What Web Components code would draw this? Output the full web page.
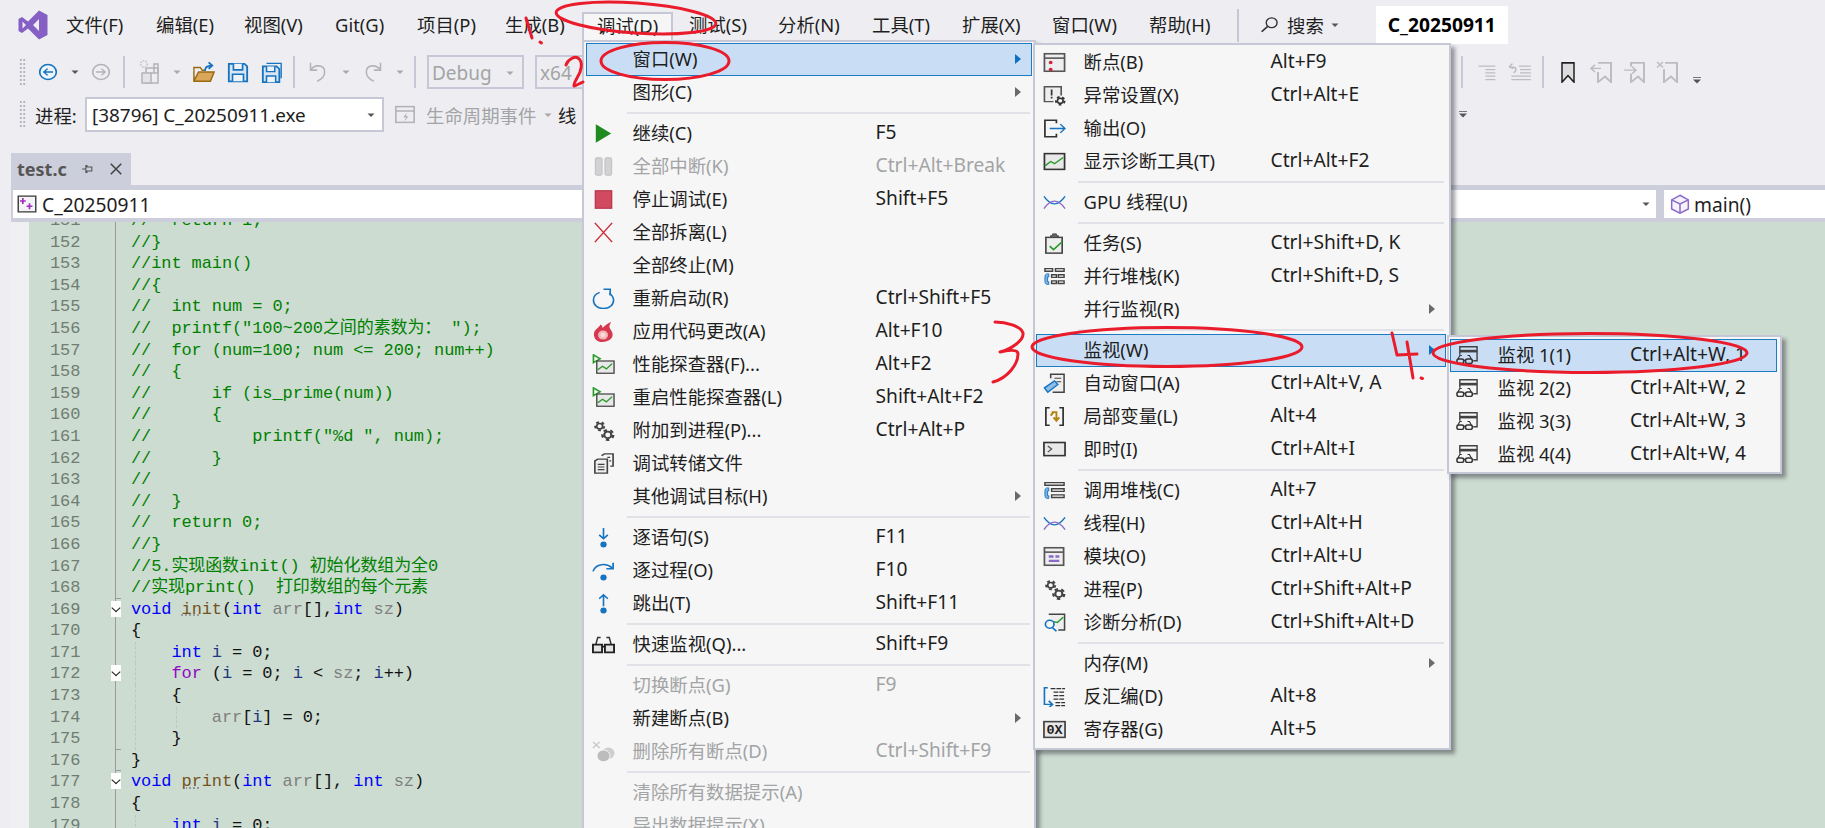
<!DOCTYPE html>
<html lang="zh"><head><meta charset="utf-8"><title>VS</title>
<style>
html,body{margin:0;padding:0;background:#eeeef2;overflow:hidden}
body{font-family:"Noto Sans","Noto Sans CJK SC",sans-serif;font-size:18.4px;color:#1e1e1e}
</style></head><body>
<vs-app>
  <vs-menubar></vs-menubar>
  <vs-toolbar row="1"></vs-toolbar>
  <vs-toolbar row="2"></vs-toolbar>
  <vs-doc></vs-doc>

  <vs-menu style="left:582px;top:40px;width:454px;--icon-w:34px;--text-x:46.5px;--key-x:289.5px;padding:.5px 2px 0 2px">
    <vs-item active arrow label="窗口(W)"></vs-item>
    <vs-item arrow label="图形(C)"></vs-item>
    <vs-sep style="--sl:41px;--sr:2px"></vs-sep>
    <vs-item icon="play" label="继续(C)" key="F5"></vs-item>
    <vs-item disabled icon="pause" label="全部中断(K)" key="Ctrl+Alt+Break"></vs-item>
    <vs-item icon="stop" label="停止调试(E)" key="Shift+F5"></vs-item>
    <vs-item icon="x" label="全部拆离(L)"></vs-item>
    <vs-item label="全部终止(M)"></vs-item>
    <vs-item icon="restart" label="重新启动(R)" key="Ctrl+Shift+F5"></vs-item>
    <vs-item icon="flame" label="应用代码更改(A)" key="Alt+F10"></vs-item>
    <vs-item icon="perf" label="性能探查器(F)..." key="Alt+F2"></vs-item>
    <vs-item icon="perf" label="重启性能探查器(L)" key="Shift+Alt+F2"></vs-item>
    <vs-item icon="gears" label="附加到进程(P)..." key="Ctrl+Alt+P"></vs-item>
    <vs-item icon="dump" label="调试转储文件"></vs-item>
    <vs-item arrow label="其他调试目标(H)"></vs-item>
    <vs-sep style="--sl:41px;--sr:2px"></vs-sep>
    <vs-item icon="stepin" label="逐语句(S)" key="F11"></vs-item>
    <vs-item icon="stepover" label="逐过程(O)" key="F10"></vs-item>
    <vs-item icon="stepout" label="跳出(T)" key="Shift+F11"></vs-item>
    <vs-sep style="--sl:41px;--sr:2px"></vs-sep>
    <vs-item icon="glasses" label="快速监视(Q)..." key="Shift+F9"></vs-item>
    <vs-sep style="--sl:41px;--sr:2px"></vs-sep>
    <vs-item disabled label="切换断点(G)" key="F9"></vs-item>
    <vs-item arrow label="新建断点(B)"></vs-item>
    <vs-item disabled icon="bpx" label="删除所有断点(D)" key="Ctrl+Shift+F9"></vs-item>
    <vs-sep style="--sl:41px;--sr:2px"></vs-sep>
    <vs-item disabled label="清除所有数据提示(A)"></vs-item>
    <vs-item disabled label="导出数据提示(X)"></vs-item>
  </vs-menu>

  <vs-menu style="left:1033px;top:43px;width:418px;--icon-w:36px;--text-x:47.5px;--key-x:234.5px;padding:.5px 3px 2.5px 1px">
    <vs-item icon="bpwin" label="断点(B)" key="Alt+F9"></vs-item>
    <vs-item icon="exc" label="异常设置(X)" key="Ctrl+Alt+E"></vs-item>
    <vs-item icon="output" label="输出(O)"></vs-item>
    <vs-item icon="diag" label="显示诊断工具(T)" key="Ctrl+Alt+F2"></vs-item>
    <vs-sep style="--sl:42px;--sr:2px"></vs-sep>
    <vs-item icon="threads" label="GPU 线程(U)"></vs-item>
    <vs-sep style="--sl:42px;--sr:2px"></vs-sep>
    <vs-item icon="task" label="任务(S)" key="Ctrl+Shift+D, K"></vs-item>
    <vs-item icon="pstacks" label="并行堆栈(K)" key="Ctrl+Shift+D, S"></vs-item>
    <vs-item arrow label="并行监视(R)"></vs-item>
    <vs-sep style="--sl:42px;--sr:2px"></vs-sep>
    <vs-item active arrow label="监视(W)"></vs-item>
    <vs-item icon="autos" label="自动窗口(A)" key="Ctrl+Alt+V, A"></vs-item>
    <vs-item icon="locals" label="局部变量(L)" key="Alt+4"></vs-item>
    <vs-item icon="immediate" label="即时(I)" key="Ctrl+Alt+I"></vs-item>
    <vs-sep style="--sl:42px;--sr:2px"></vs-sep>
    <vs-item icon="callstack" label="调用堆栈(C)" key="Alt+7"></vs-item>
    <vs-item icon="threads" label="线程(H)" key="Ctrl+Alt+H"></vs-item>
    <vs-item icon="modules" label="模块(O)" key="Ctrl+Alt+U"></vs-item>
    <vs-item icon="gears" label="进程(P)" key="Ctrl+Shift+Alt+P"></vs-item>
    <vs-item icon="diagan" label="诊断分析(D)" key="Ctrl+Shift+Alt+D"></vs-item>
    <vs-sep style="--sl:42px;--sr:2px"></vs-sep>
    <vs-item arrow label="内存(M)"></vs-item>
    <vs-item icon="disasm" label="反汇编(D)" key="Alt+8"></vs-item>
    <vs-item icon="reg" label="寄存器(G)" key="Alt+5"></vs-item>
  </vs-menu>

  <vs-menu style="left:1447px;top:335px;width:335px;--icon-w:34px;--text-x:47.5px;--key-x:180px;padding:1.5px 3px 1.5px 1px">
    <vs-item active icon="watch" label="监视 1(1)" key="Ctrl+Alt+W, 1"></vs-item>
    <vs-item icon="watch" label="监视 2(2)" key="Ctrl+Alt+W, 2"></vs-item>
    <vs-item icon="watch" label="监视 3(3)" key="Ctrl+Alt+W, 3"></vs-item>
    <vs-item icon="watch" label="监视 4(4)" key="Ctrl+Alt+W, 4"></vs-item>
  </vs-menu>

  <vs-marks></vs-marks>
</vs-app>

<script>
const D='#424242',B='#1573c0',G='#2a9a2a',P='#8a6ac8',R='#d0203c',L='#b4b4b8',F='fill="none"';
const gear=(x,y,r,c=D)=>`<circle cx="${x}" cy="${y}" r="${r*.62}" ${F} stroke="${c}" stroke-width="${r*.36}"/><circle cx="${x}" cy="${y}" r="${r*.95}" ${F} stroke="${c}" stroke-width="${r*.4}" stroke-dasharray="${r*.6} ${r*.6}"/>`;
const specs=(x,y,c=D)=>`<path d="M${x+1} ${y+3}l2-4h2M${x+15} ${y+3}l-2-4h-2" ${F} stroke="${c}" stroke-width="1.2"/><rect x="${x}" y="${y+3}" width="7" height="5" rx="2" ${F} stroke="${c}" stroke-width="1.6"/><rect x="${x+9}" y="${y+3}" width="7" height="5" rx="2" ${F} stroke="${c}" stroke-width="1.6"/><path d="M${x+7} ${y+4.5}h2" stroke="${c}" stroke-width="1.4"/>`;
const phone=`<path d="M6 9H4.5C3 9 2 10 2 13.5v3c0 3.500 1 4.500 2.500 4.500H6v-3H4.800v-5.500H6z" fill="#7fb4e2" stroke="${B}" stroke-width="1"/>`;
const perf=`<path d="M1.500 1v9l7-4.500z" ${F} stroke="${G}" stroke-width="1.700"/><rect x="5" y="8" width="18" height="14" fill="#e8e8e8" stroke="${D}" stroke-width="1.400"/><path d="M6 18l5-4 4 3 6-6" ${F} stroke="${G}" stroke-width="1.500"/>`;
const ICONS={
 caret:`<path d="M5 9h14l-7 7z" fill="#555"/>`, caretOff:`<path d="M5 9h14l-7 7z" fill="#a8a8ac"/>`,
 over:`<path d="M4 4h16v2H4z" fill="#777"/><path d="M4 9h16l-8 8z" fill="#555"/>`,
 back:`<circle cx="12" cy="12" r="10" fill="#eef4fb" stroke="${B}" stroke-width="2"/><path d="M18 12H7M11.500 7.500L7 12l4.500 4.500" ${F} stroke="${B}" stroke-width="1.800"/>`,
 fwd:`<circle cx="12" cy="12" r="10" ${F} stroke="${L}" stroke-width="2"/><path d="M6 12h11M12.500 7.500L17 12l-4.500 4.500" ${F} stroke="${L}" stroke-width="1.800"/>`,
 newp:`<path d="M7 8h12v15H7z" ${F} stroke="${L}" stroke-width="1.600"/><path d="M11 13h8v-9h-4v9" ${F} stroke="${L}" stroke-width="1.600"/><rect x="3" y="13" width="9" height="10" fill="#e4e4e8" stroke="${L}" stroke-width="1.500"/><circle cx="5" cy="4" r="3.200" ${F} stroke="#ccc" stroke-width="2" stroke-dasharray="1.500 1.200"/>`,
 folder:`<path d="M1 10V22h18l4-10H6l-5 10" fill="#d9a65a" stroke="#9a6a12" stroke-width="1.600"/><path d="M1 10V7h7l2 3h4" ${F} stroke="#9a6a12" stroke-width="1.600"/><path d="M13 11c0-4 3-6 7-6M17 1.500L21 5l-4 3.500" ${F} stroke="${B}" stroke-width="2"/>`,
 save:`<path d="M2 2h17l3 3v17H2z" fill="#d9e6f2" stroke="${B}" stroke-width="2"/><path d="M7 2v7h10V2M6 22v-8h12v8" fill="#eef3f8" stroke="${B}" stroke-width="1.800"/>`,
 saveall:`<path d="M6 1.500h16v17" ${F} stroke="${B}" stroke-width="1.500"/><path d="M2 5h15l3 3v15H2z" fill="#d9e6f2" stroke="${B}" stroke-width="2"/><path d="M6 5v6h9V5M6 23v-7h10v7" fill="#eef3f8" stroke="${B}" stroke-width="1.700"/>`,
 undo:`<path d="M3 2v8h8" ${F} stroke="${L}" stroke-width="1.800"/><path d="M3 10C8 3 20 4 20 12c0 5-4 8-9 10" ${F} stroke="${L}" stroke-width="1.800"/>`,
 redo:`<path d="M21 2v8h-8" ${F} stroke="${L}" stroke-width="1.800"/><path d="M21 10C16 3 4 4 4 12c0 5 4 8 9 10" ${F} stroke="${L}" stroke-width="1.800"/>`,
 life:`<rect x="2" y="3" width="20" height="18" ${F} stroke="${L}" stroke-width="1.800"/><path d="M2 8h20" stroke="${L}" stroke-width="1.800"/><path d="M14 10l-4 5h3l-2 5 5-6h-3z" fill="${L}"/>`,
 ind:`<path d="M2 5h7M8 5h14M10 9h12M10 13h12M10 17h12M10 21h12" stroke="#bdbdc1" stroke-width="1.500"/>`,
 unind:`<path d="M11 5h11M12 9h10M12 13h10M4 17h18M4 21h18" stroke="#bdbdc1" stroke-width="1.500"/><path d="M2 6l3-4M2 6l4 2M2 6h4c3 0 3 5 0 7" ${F} stroke="#bdbdc1" stroke-width="1.500"/>`,
 bm:`<path d="M4 2h16v21l-8-7-8 7z" fill="#dcdcdf" stroke="#222" stroke-width="2"/>`,
 bmp:`<path d="M8 2h13v21l-6-6-7 6V12" ${F} stroke="#bdbdc1" stroke-width="2"/><path d="M1 8h10M5 4L1 8l4 4" ${F} stroke="#bdbdc1" stroke-width="1.500"/>`,
 bmn:`<path d="M8 6V2h13v21l-6-6-7 6V14" ${F} stroke="#bdbdc1" stroke-width="2"/><path d="M1 10h12M9 6l4 4-4 4" ${F} stroke="#bdbdc1" stroke-width="1.500"/>`,
 bmx:`<path d="M9 2h12v21l-6-6-7 6V9" ${F} stroke="#bdbdc1" stroke-width="2"/><path d="M1 1l6 6M7 1L1 7" stroke="#bdbdc1" stroke-width="1.500"/>`,
 search:`<circle cx="14" cy="9" r="6.500" ${F} stroke="#333" stroke-width="1.700"/><path d="M9 14l-7 7" stroke="#333" stroke-width="2.200"/>`,
 proj:`<rect x="1.500" y="1.500" width="21" height="21" fill="#f4f4f6" stroke="#444" stroke-width="1.800"/><path d="M6 4v8M2.500 8h7M14 11v8M10.500 15h7" stroke="#a12bc4" stroke-width="2" transform="translate(1 0)"/>`,
 cube:`<path d="M12 1.500L22 7v11l-10 5L2 18V7z" fill="#f6f2fb" stroke="${P}" stroke-width="1.800"/><path d="M2 7l10 5 10-5M12 12v11" ${F} stroke="${P}" stroke-width="1.800"/>`,
 pin:`<path d="M2 12h7M9 5v14h2v-3h9V8h-9V5z" ${F} stroke="#555" stroke-width="2"/>`,
 close:`<path d="M3 3l18 18M21 3L3 21" stroke="#444" stroke-width="2.600"/>`,
 play:`<path d="M4 1.500L20 12 4 22.500z" fill="#1f8a1f"/>`,
 pause:`<rect x="3.500" y="2" width="7" height="20" rx="1.500" fill="#d2d2d4" stroke="#bcbcbe"/><rect x="13.500" y="2" width="7" height="20" rx="1.500" fill="#d2d2d4" stroke="#bcbcbe"/>`,
 stop:`<rect x="3.500" y="2" width="17" height="20" fill="#d24a60" stroke="#b83a4e" stroke-width="1.400"/>`,
 x:`<path d="M3 1l18 22M21 1L3 23" stroke="#cc2a3c" stroke-width="1.500"/>`,
 restart:`<path d="M8 5C4 6.500 1.500 10 1.500 14c0 5.500 4.700 9.500 10.500 9.500s10.500-4 10.500-9.500c0-3.500-1.700-6-4.500-8" ${F} stroke="${B}" stroke-width="1.700"/><path d="M12 1.500h7v7" ${F} stroke="${B}" stroke-width="1.700"/>`,
 flame:`<path d="M11 24C5 24 2 20 2 15 2 10 7 8 9 4c1.500 1 2 2.500 2 4 2-3 6-6 9-7-1 2.500-2.500 4.500-1.500 7 1 2.500 3 4 3 7.500C22 20 17 24 11 24z" fill="#d6394f"/><circle cx="11.500" cy="16" r="5.200" fill="#f4b6b6"/><circle cx="11.500" cy="16" r="2.600" fill="#fadcdc"/>`,
 perf, gears:gear(8,7,5)+gear(16.500,17,6),
 dump:`<path d="M10 3l3-2h9v14h-3" ${F} stroke="${D}" stroke-width="1.700"/><path d="M3 9l3-2h10v16H3z" fill="#efefef" stroke="${D}" stroke-width="1.700"/><path d="M6 13h7M6 16h7M6 19h7M16 5h3M18 9h2" stroke="${D}" stroke-width="1.400"/>`,
 stepin:`<path d="M12 1v12M7.500 9l4.500 4.500L16.500 9" ${F} stroke="${B}" stroke-width="1.700"/><circle cx="12" cy="20" r="3.300" fill="${B}"/>`,
 stepover:`<path d="M1 13C4 4 15 3 21 9" ${F} stroke="${B}" stroke-width="1.800"/><path d="M22 3v7h-7" ${F} stroke="${B}" stroke-width="1.800"/><circle cx="12" cy="20" r="3.300" fill="${B}"/>`,
 stepout:`<path d="M12 15V2M7.500 6.500L12 2l4.500 4.500" ${F} stroke="${B}" stroke-width="1.700"/><circle cx="12" cy="20" r="3.300" fill="${B}"/>`,
 glasses:`<path d="M4 12L6 4h3M20 12L18 4h-3" ${F} stroke="#333" stroke-width="1.500"/><path d="M1 12h9.500v9H1zM13.500 12H23v9h-9.500zM10 14.500h4" fill="#e6e6e6" stroke="#222" stroke-width="2"/>`,
 bpx:`<path d="M1 1l7 7M8 1L1 8" stroke="#c8c8ca" stroke-width="1.500"/><circle cx="17" cy="14" r="6.500" fill="#cecece"/><circle cx="12" cy="17" r="6.800" fill="#bcbcbc" stroke="#f6f6f6"/>`,
 bpwin:`<rect x="1.500" y="2" width="21" height="20" fill="#eee" stroke="#555" stroke-width="1.800"/><path d="M2 7h20" stroke="#555" stroke-width="1.800"/><circle cx="8" cy="12" r="2" fill="${R}"/><circle cx="8" cy="20" r="2" fill="${R}"/>`,
 exc:`<path d="M19 12V2H1.500v17H11" fill="#eee" stroke="#555" stroke-width="1.700"/><path d="M9 5v7M9 13.500v2" stroke="#333" stroke-width="1.800"/>`+gear(18,18,4.800,'#333'),
 output:`<path d="M14 6V2.500H2v19h12V18" ${F} stroke="#333" stroke-width="1.800"/><path d="M7 12h16M18 7l5 5-5 5" ${F} stroke="${B}" stroke-width="1.600"/>`,
 diag:`<rect x="1.500" y="3" width="21" height="18" fill="#e8e8e8" stroke="#333" stroke-width="1.800"/><path d="M2 17l6-5 4 2.500 9-7" ${F} stroke="${G}" stroke-width="1.600"/>`,
 threads:`<path d="M1 5Q12 22 23 5" ${F} stroke="${B}" stroke-width="1.500"/><path d="M1 19Q12 2 23 19" ${F} stroke="${P}" stroke-width="1.500"/>`,
 task:`<rect x="3" y="5" width="17" height="18" fill="#eee" stroke="#444" stroke-width="1.700"/><path d="M8 5V3h2V1h4v2h2v2z" fill="#666" stroke="#444"/><path d="M7 15l4 4 9-9" ${F} stroke="${G}" stroke-width="1.700"/>`,
 pstacks:`<path d="M2 3h8v3H2zM13 3h9v3h-9zM9 10h5v3H9zM16 10h6v3h-6zM9 17h5v3H9zM16 17h6v3h-6z" ${F} stroke="#444" stroke-width="1.500"/>`+phone,
 watch:`<path d="M4 11V2h18v16h-4" ${F} stroke="${D}" stroke-width="1.500"/><path d="M4 7h18" stroke="${D}" stroke-width="3"/>`+specs(1,13,'#333'),
 autos:`<path d="M8 6V1.500h14V22h-12" fill="#eee" stroke="#444" stroke-width="1.600"/><path d="M12 6h7M14 10h5" stroke="#444" stroke-width="1.400"/><path d="M1.500 17L12 9l3.500 4L5 22z" fill="#8ebde6" stroke="${B}" stroke-width="1.500"/>`,
 locals:`<path d="M7 2H3v20h4M17 2h4v20h-4" ${F} stroke="#333" stroke-width="1.800"/><path d="M9 7h5v10M8 11l3-4M17 13l-3 4-3-4" ${F} stroke="#b4820e" stroke-width="2"/>`,
 immediate:`<rect x="1" y="4" width="22" height="15" fill="#e8e8e8" stroke="#333" stroke-width="1.800"/><path d="M5 8l4 3.500L5 15" ${F} stroke="#555" stroke-width="1.400"/>`,
 callstack:`<path d="M2 3h20v3H2zM9 10h13v3H9zM9 17h13v3H9z" ${F} stroke="#444" stroke-width="1.500"/>`+phone,
 modules:`<rect x="1.500" y="2" width="20" height="20" fill="#eee" stroke="#555" stroke-width="1.800"/><path d="M2 7h19" stroke="#555" stroke-width="1.800"/><path d="M6 12h5M13 12h4M6 17h11" stroke="${P}" stroke-width="2.600"/>`,
 diagan:`<path d="M6 2.500h16.500v18H16" fill="#eee" stroke="#444" stroke-width="1.600"/><path d="M11 11l4 1 6-6" ${F} stroke="${G}" stroke-width="1.600"/><circle cx="7" cy="14" r="4.500" fill="#f6f6f6" stroke="${B}" stroke-width="1.800"/><path d="M10 18l4 4" stroke="${B}" stroke-width="2"/>`,
 disasm:`<path d="M5 2H1.500v19H9M6 17l4 4-4 4" ${F} stroke="${B}" stroke-width="1.700"/><path d="M8 3h15M11 7h12M11 11h12M11 15h12M13 19h10M13 22.500h10" stroke="#333" stroke-width="1.500" stroke-dasharray="5 1"/>`,
 reg:`<rect x="1" y="3" width="22" height="18" fill="#e8e8e8" stroke="#444" stroke-width="1.800"/><text x="12" y="17.500" text-anchor="middle" font-family="Liberation Mono" font-weight="700" font-size="14" fill="#222">0X</text>`,
 logo:`<path fill-rule="evenodd" fill="#865fc5" d="M21 .5L29.500 5v20L21 29.500 10 18.500 4 23 .5 21V9L4 7l6 4.500zM21 9l-6 6 6 6zM4.500 11.500v7L8 15z"/>`
};

function shell(el,html){el.attachShadow({mode:'open'}).innerHTML=html;}

class VsIcon extends HTMLElement{
 connectedCallback(){ if(this.shadowRoot) return;
  const w=this.getAttribute('w')||24,h=this.getAttribute('h')||22,vb=this.getAttribute('vb')||'0 0 24 24';
  shell(this,`<style>:host{display:inline-flex;flex:none}svg{display:block}</style><svg width="${w}" height="${h}" viewBox="${vb}" preserveAspectRatio="none">${ICONS[this.getAttribute('name')]||''}</svg>`);
 }
}
customElements.define('vs-icon',VsIcon);

class VsApp extends HTMLElement{
 constructor(){super();shell(this,`<style>:host{display:flex;flex-direction:column;position:relative;width:1825px;height:828px;overflow:hidden;background:#eeeef2}</style><slot></slot>`);}
}
customElements.define('vs-app',VsApp);

class VsMenubar extends HTMLElement{
 constructor(){super();
  const items=[['文件(F)',90],['编辑(E)',88],['视图(V)',91],['Git(G)',82],['项目(P)',88],['生成(B)',77],['调试(D)',91,13,1],['测试(S)',105,16],['分析(N)',94],['工具(T)',90],['扩展(X)',90],['窗口(W)',97],['帮助(H)',88]];
  shell(this,`<style>
  :host{display:flex;align-items:center;height:50px;flex:none}
  .logo{width:66px;padding-left:18px;box-sizing:border-box;display:flex}
  .t{white-space:nowrap;box-sizing:border-box;flex:none;height:50px;line-height:50px}
  .on{height:28px;line-height:23px;margin-top:12px;align-self:flex-start;background:#f6f6f6;border:2px solid #c6c8d8;border-bottom:none}
  .sep{width:2px;height:33px;background:#c6c8d8;margin-right:24px}
  .title{margin-left:35px;height:38px;width:132px;box-sizing:border-box;padding-left:12px;line-height:38px;background:#fff;font-weight:700;font-size:19.2px;color:#000}
  .cap{margin-left:7px;white-space:nowrap}
  </style>
  <div class="logo"><vs-icon name="logo" w="30" h="30" vb="0 0 30 30"></vs-icon></div>
  ${items.map(([t,w,p,on])=>`<div class="t${on?' on':''}" style="width:${w}px;padding-left:${p||0}px">${t}</div>`).join('')}
  <div class="sep"></div>
  <vs-icon name="search" w="20" h="18" style="margin-left:-3px"></vs-icon><span class="cap">搜索</span>
  <vs-icon name="caret" w="12" h="12" style="margin-left:5px"></vs-icon>
  <div class="title">C_20250911</div>`);
 }
}
customElements.define('vs-menubar',VsMenubar);

class VsToolbar extends HTMLElement{
 connectedCallback(){ if(this.shadowRoot) return;
  const cell=(n,w,iw=20,ih=20)=>`<div class="c" style="width:${w}px">${n?`<vs-icon name="${n}" w="${iw}" h="${ih}"></vs-icon>`:''}</div>`;
  const sep=w=>`<div class="c" style="width:${w}px"><i class="sp"></i></div>`;
  const car=(w,off)=>cell(off?'caretOff':'caret',w,12,12);
  const grip=`<div class="c" style="width:18px"><i class="gr"></i></div>`;
  const row1=grip+cell('back',32,20,18)+car(22)+cell('fwd',30,20,18)+sep(16)+cell('newp',38,24,24)+car(14,1)+cell('folder',40,22,22)+cell('save',28,22,21)+cell('saveall',40,22,21)+sep(4)+cell('undo',44,20,22)+car(12,1)+cell('redo',42,20,22)+car(12,1)+sep(18)
   +`<div class="box" style="width:97px;margin-left:3px">Debug<vs-icon name="caretOff" w="12" h="12"></vs-icon></div><div class="box" style="width:110px;margin-left:11px">x64</div><div class="fill"></div>`
   +sep(20)+cell('ind',30,20,20)+cell('unind',36,26,20)+sep(10)+cell('bm',40,18,22)+cell('bmp',28,24,22)+cell('bmn',38,24,22)+cell('bmx',28,24,22)+`<div class="c" style="width:30px;padding-top:17px">${`<vs-icon name="over" w="12" h="12"></vs-icon>`}</div><div style="width:113px"></div>`;
  const row2=grip+`<span class="lb" style="margin-left:3px;width:50px">进程:</span><div class="drop"><span>[38796] C_20250911.exe</span><vs-icon name="caret" w="12" h="12"></vs-icon></div>`+cell('life',42,22,21)+`<span class="off" style="width:112px">生命周期事件</span>`+car(20,1)+`<span class="lb">线</span><div class="fill"></div>`+cell('over',20,12,12)+`<div style="width:352px"></div>`;
  shell(this,`<style>
  :host{display:flex;align-items:center;flex:none;padding-left:14px;white-space:nowrap;height:${this.getAttribute('row')=='1'?44:41}px}
  .c{display:flex;align-items:center;justify-content:center;flex:none;box-sizing:border-box}
  .sp{display:block;width:2px;height:32px;background:#c6c8d8}
  .gr{display:block;width:8px;height:29px;background-image:radial-gradient(#b0b0b8 1px,transparent 1.300px);background-size:3.500px 4px}
  .box{flex:none;height:34px;box-sizing:border-box;border:2px solid #c6c8d8;color:#a2a4a5;display:flex;align-items:center;justify-content:space-between;padding:2px 6px 0 3px;font-size:19px}
  .lb{flex:none}.off{color:#a2a4a5;flex:none}
  .fill{flex:1}
  .drop{flex:none;width:299px;height:35px;box-sizing:border-box;background:#fff;border:2px solid #c6c8d8;display:flex;align-items:center;justify-content:space-between;padding:0 5px;font-size:18.9px}
  </style>${this.getAttribute('row')=='1'?row1:row2}`);
 }
}
customElements.define('vs-toolbar',VsToolbar);

class VsDoc extends HTMLElement{
 constructor(){super();
  shell(this,`<style>
  :host{display:flex;flex-direction:column;flex:1;min-height:0;margin:18px 0 0 11px}
  .tab{display:flex;align-items:center;width:120px;height:32px;box-sizing:border-box;background:#cccedb;padding-left:6px;flex:none}
  .tab b{color:#555;width:64px;font-size:18px}
  .tab vs-icon+vs-icon{margin-left:15px}
  .well{background:#cccedb;flex:none;padding:5px 0 4px 2px;display:flex;gap:8px}
  .nav{height:28px;background:#fff;display:flex;align-items:center;white-space:nowrap;flex:none;box-sizing:border-box;font-size:19.2px}
  .a{width:1643px;padding:0 2px 0 4px;justify-content:flex-start}
  .a vs-icon:last-child{margin-left:auto;margin-right:2px}
  .a span{margin-left:5px}
  .b{flex:1;padding-left:6px}
  .b span{margin-left:4px}
  </style>
  <div class="tab"><b>test.c</b><vs-icon name="pin" w="13" h="12"></vs-icon><vs-icon name="close" w="14" h="14"></vs-icon></div>
  <div class="well">
   <div class="nav a"><vs-icon name="proj" w="20" h="18"></vs-icon><span>C_20250911</span><vs-icon name="caret" w="12" h="12"></vs-icon></div>
   <div class="nav b"><vs-icon name="cube" w="20" h="20"></vs-icon><span>main()</span></div>
  </div>
  <vs-editor></vs-editor>`);
 }
}
customElements.define('vs-doc',VsDoc);

const esc=s=>s.replace(/&/g,'&amp;').replace(/</g,'&lt;');
const c=s=>`<span class="cm">${esc(s)}</span>`, k=s=>`<span class="kw">${s}</span>`, p=s=>`<span class="pa">${s}</span>`, v=s=>`<span class="lv">${s}</span>`, fn=(a,b)=>`<span class="fn"><u>${a}</u>${b}</span>`, ct=s=>`<span class="ct">${s}</span>`;
const LINES=[
 [151,c('//  return 1;')],[152,c('//}')],[153,c('//int main()')],[154,c('//{')],[155,c('//  int num = 0;')],
 [156,c('//  printf("100~200之间的素数为： ");')],[157,c('//  for (num=100; num <= 200; num++)')],[158,c('//  {')],
 [159,c('//      if (is_prime(num))')],[160,c('//      {')],[161,c('//          printf("%d ", num);')],[162,c('//      }')],
 [163,c('//')],[164,c('//  }')],[165,c('//  return 0;')],[166,c('//}')],[167,c('//5.实现函数init() 初始化数组为全0')],
 [168,c('//实现print()  打印数组的每个元素'),'e'],
 [169,k('void')+' '+fn('in','it')+'('+k('int')+' '+p('arr')+'[],'+k('int')+' '+p('sz')+')','f'],
 [170,'{'],
 [171,'    '+k('int')+' '+v('i')+' = 0;','',[135]],
 [172,'    '+ct('for')+' ('+v('i')+' = 0; '+v('i')+' &lt; '+p('sz')+'; '+v('i')+'++)','f',[135]],
 [173,'    {','',[135]],
 [174,'        '+p('arr')+'['+v('i')+'] = 0;','',[135,176]],
 [175,'    }','e',[135]],
 [176,'}','e'],
 [177,k('void')+' '+fn('pr','int')+'('+k('int')+' '+p('arr')+'[], '+k('int')+' '+p('sz')+')','f'],
 [178,'{'],
 [179,'    '+k('int')+' '+v('i')+' = 0;','',[135]]
];
class VsEditor extends HTMLElement{
 constructor(){super();
  shell(this,`<style>
  :host{display:block;flex:1;min-height:0;overflow:hidden;background:#cddcd0;font-family:"Liberation Mono","DejaVu Sans Mono","Noto Sans CJK SC",monospace;font-size:17px;letter-spacing:-.1px;color:#111}
  .all{margin-top:-12px}
  .r{display:flex;height:21.6px;line-height:21.6px;white-space:pre;position:relative}
  .g{width:18px;flex:none;background:#f0f0f3;margin-right:21px}
  .n{width:65px;flex:none;color:#6f7d72}
  .o{width:16px;flex:none;border-left:1px solid #9a9a9a;box-sizing:border-box;position:relative}
  .e .o::after{content:"";position:absolute;left:0;bottom:0;width:5px;border-bottom:1px solid #9a9a9a}
  .f .o::before{content:"";position:absolute;left:-5px;top:2px;width:10px;height:16px;background:#fff}
  .f .o i{position:absolute;left:-3px;top:6px;width:5px;height:5px;border:solid #222;border-width:0 1.300px 1.300px 0;transform:scaleX(1.100) rotate(45deg)}
  .guide{position:absolute;top:0;bottom:0;border-left:1px dashed #bcc9bf}
  .cm{color:#008000}.kw{color:#0000ff}.pa{color:#808080}.lv{color:#1f377f}.ct{color:#8f08c4}.fn{color:#74531f}
  u{text-decoration:underline dotted #8a8a8a}
  </style><div class="all">${LINES.map(([n,h,t,g])=>`<div class="r ${t||''}"><div class="g"></div><div class="n">${n}</div><div class="o">${t=='f'?'<i></i>':''}</div><div>${h}</div>${(g||[]).map(x=>`<span class="guide" style="left:${x-11}px"></span>`).join('')}</div>`).join('')}</div>`);
 }
}
customElements.define('vs-editor',VsEditor);

class VsMenu extends HTMLElement{
 constructor(){super();shell(this,`<style>:host{position:absolute;box-sizing:border-box;display:block;background:#f6f6f6;border:2px solid #c6c8d8;box-shadow:4px 4px 4px rgba(40,40,50,.45);z-index:2}</style><slot></slot>`);}
}
customElements.define('vs-menu',VsMenu);

class VsSep extends HTMLElement{
 constructor(){super();shell(this,`<style>:host{display:flex;height:8px;align-items:center;padding-left:var(--sl);padding-right:var(--sr)}i{display:block;flex:1;height:2px;background:#e0e2e8}</style><i></i>`);}
}
customElements.define('vs-sep',VsSep);

class VsItem extends HTMLElement{
 connectedCallback(){ if(this.shadowRoot) return;
  const a=n=>this.getAttribute(n),ic=a('icon');
  shell(this,`<style>
  :host{display:flex;align-items:center;height:33px;box-sizing:border-box;white-space:nowrap;position:relative;color:#1e1e1e}
  :host([disabled]){color:#a2a4a5}
  :host([active]){background:#c9def5;outline:1.500px solid #1b7cc6;outline-offset:-1.500px}
  .i{width:var(--icon-w);flex:none;display:flex;justify-content:center}
  .l{width:calc(var(--key-x) - var(--icon-w));padding-left:calc(var(--text-x) - var(--icon-w));box-sizing:border-box;flex:none;margin-top:-3px}
  .k{flex:1;margin-top:-3px;font-size:19.2px}
  .a{flex:none;width:0;height:0;margin-right:11px;border-left:6px solid #6a6a6a;border-top:5px solid transparent;border-bottom:5px solid transparent}
  :host([active]) .a{border-left-color:#0e70c0}
  </style><div class="i">${ic?`<vs-icon name="${ic}" w="23" h="21"></vs-icon>`:''}</div><div class="l">${a('label')}</div><div class="k">${a('key')||''}</div>${this.hasAttribute('arrow')?'<div class="a"></div>':''}`);
 }
}
customElements.define('vs-item',VsItem);

class VsMarks extends HTMLElement{
 constructor(){super();
  shell(this,`<style>:host{position:absolute;left:0;top:0;width:1825px;height:828px;z-index:5;pointer-events:none}svg{display:block}</style>
  <svg width="1825" height="828" fill="none" stroke="#ea1c2c" stroke-width="3" stroke-linecap="round" stroke-linejoin="round">
   <ellipse cx="636" cy="18" rx="80" ry="15" transform="rotate(4 635 18)"/>
   <ellipse cx="665" cy="61" rx="64" ry="18.500"/>
   <ellipse cx="1167" cy="347" rx="135" ry="19.500"/>
   <ellipse cx="1590" cy="353" rx="157" ry="19.500"/>
   <path d="M526 18L532 38M540 42l1.500 1"/>
   <path d="M566 65C568 59 575 56 578 58 584 62 581 72 577 78 575 82 573 85 574 86 577 85 581 83 583 82"/>
   <path d="M995 322C1006 322 1021 326 1023 333 1024 340 1012 349 1000 352 1008 350 1018 349 1018 354 1018 364 1008 378 993 382"/>
   <path d="M1392 333L1397 355 1417 354M1407 342L1413 378M1421 378l1.500 .5"/>
  </svg>`);
 }
}
customElements.define('vs-marks',VsMarks);
</script>
</body></html>
